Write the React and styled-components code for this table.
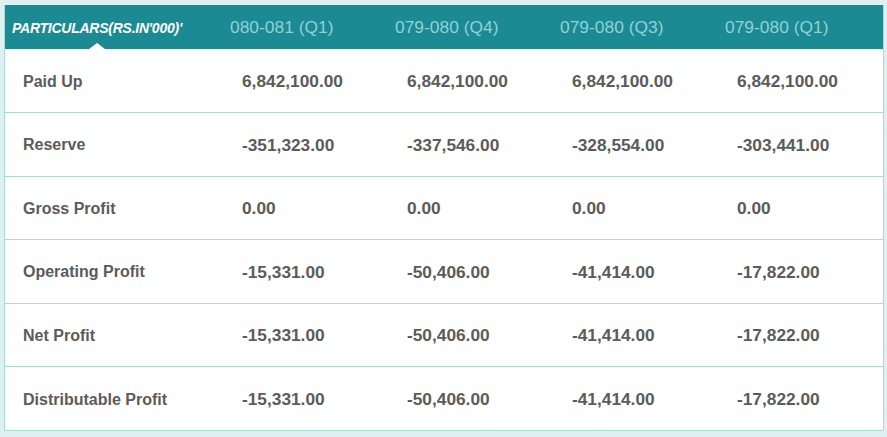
import React from "react";
import styled, { createGlobalStyle } from "styled-components";

const GlobalStyle = createGlobalStyle`
  html, body {
    margin: 0;
    padding: 0;
    background: #dff0f0;
    font-family: "Liberation Sans", Arial, sans-serif;
  }
`;

const Page = styled.div`
  padding: 5px 3px 5px 4px;
  width: 887px;
  height: 437px;
  box-sizing: border-box;
`;

const Card = styled.div`
  width: 880px;
  box-sizing: border-box;
  border: 1px solid #a9dcd2;
  border-top: none;
  background: #fff;
`;

const Table = styled.table`
  width: 878px;
  border-collapse: collapse;
  table-layout: fixed;
`;

const Col = styled.col`
  width: ${(p) => p.$w}px;
`;

const HeadCell = styled.th`
  position: relative;
  box-sizing: border-box;
  height: 44px;
  padding: 1px 7px 0;
  background: #1b8a93;
  text-align: left;
  white-space: nowrap;
  color: ${(p) => (p.$active ? "#ffffff" : "#8fd2d7")};
  font-size: ${(p) => (p.$active ? "14px" : "17.4px")};
  font-weight: ${(p) => (p.$active ? "bold" : "normal")};
  font-style: ${(p) => (p.$active ? "italic" : "normal")};
  letter-spacing: ${(p) => (p.$active ? "-0.25px" : "0")};

  ${(p) =>
    p.$active &&
    `
    &::after {
      content: "";
      position: absolute;
      left: 84px;
      bottom: 0;
      border-left: 8px solid transparent;
      border-right: 8px solid transparent;
      border-bottom: 6px solid #ffffff;
    }
  `}
`;

const Row = styled.tr`
  border-top: 1px solid #a9dcd2;
  &:first-child {
    border-top: none;
  }
`;

const Cell = styled.td`
  box-sizing: border-box;
  height: 63.5px;
  padding: 2px 0 0 ${(p) => (p.$label ? "18px" : "19px")};
  color: #5b5b5b;
  font-weight: bold;
  font-size: ${(p) => (p.$label ? "16px" : "17.3px")};
  white-space: nowrap;
`;

const widths = [218, 165, 165, 165, 165];

const columns = ["080-081 (Q1)", "079-080 (Q4)", "079-080 (Q3)", "079-080 (Q1)"];

const rows = [
  ["Paid Up", "6,842,100.00", "6,842,100.00", "6,842,100.00", "6,842,100.00"],
  ["Reserve", "-351,323.00", "-337,546.00", "-328,554.00", "-303,441.00"],
  ["Gross Profit", "0.00", "0.00", "0.00", "0.00"],
  ["Operating Profit", "-15,331.00", "-50,406.00", "-41,414.00", "-17,822.00"],
  ["Net Profit", "-15,331.00", "-50,406.00", "-41,414.00", "-17,822.00"],
  ["Distributable Profit", "-15,331.00", "-50,406.00", "-41,414.00", "-17,822.00"],
];

export default function App() {
  return (
    <>
      <GlobalStyle />
      <Page>
        <Card>
          <Table>
            <colgroup>
              {widths.map((w, i) => (
                <Col key={i} $w={w} />
              ))}
            </colgroup>
            <thead>
              <tr>
                <HeadCell $active>PARTICULARS(RS.IN'000)'</HeadCell>
                {columns.map((c) => (
                  <HeadCell key={c}>{c}</HeadCell>
                ))}
              </tr>
            </thead>
            <tbody>
              {rows.map((r) => (
                <Row key={r[0]}>
                  {r.map((v, i) => (
                    <Cell key={i} $label={i === 0}>
                      {v}
                    </Cell>
                  ))}
                </Row>
              ))}
            </tbody>
          </Table>
        </Card>
      </Page>
    </>
  );
}
